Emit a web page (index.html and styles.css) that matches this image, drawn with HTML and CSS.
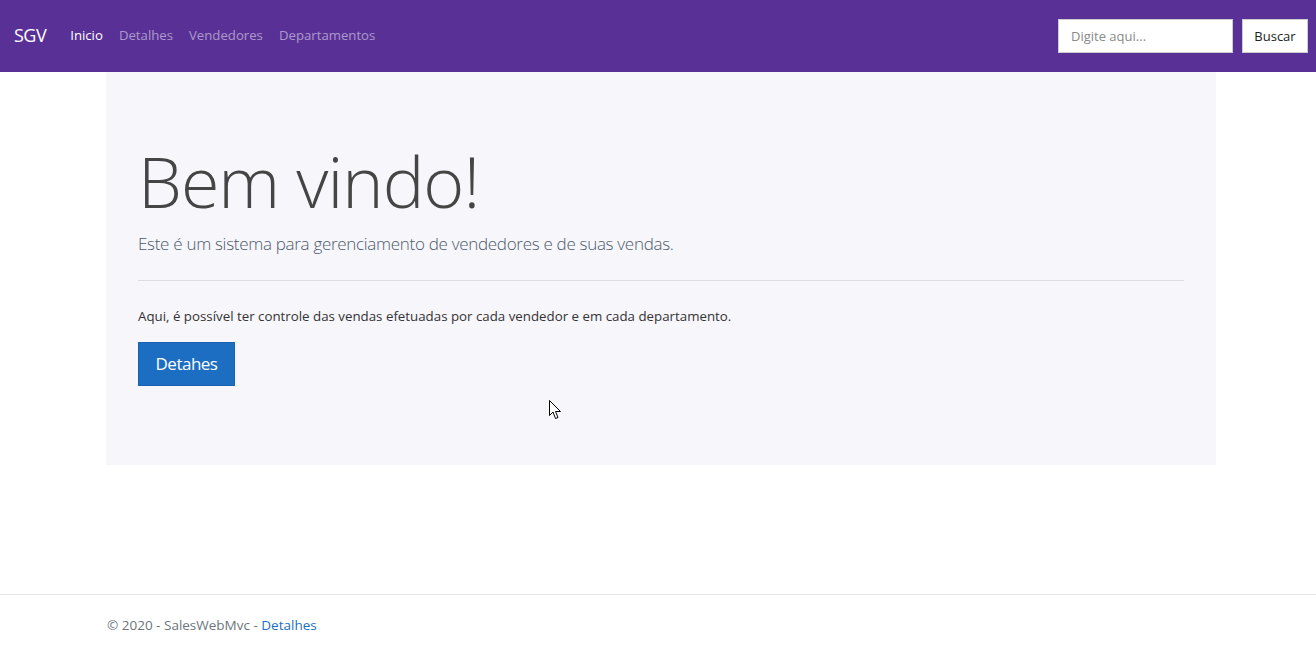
FILE: index.html
```html
<!DOCTYPE html>
<html lang="pt-br">
<head>
    <meta charset="UTF-8">
    <meta name="viewport" content="width=device-width, initial-scale=1.0">
    <title>Inicio - SalesWebMvc</title>
    <link rel="stylesheet" href="styles.css">
</head>
<body>
    <header class="navbar">
        <a class="brand" href="#">SGV</a>
        <nav class="nav-links">
            <a class="nav-link active" href="#">Inicio</a>
            <a class="nav-link" href="#">Detalhes</a>
            <a class="nav-link" href="#">Vendedores</a>
            <a class="nav-link" href="#">Departamentos</a>
        </nav>
        <form class="search">
            <input type="text" class="search-input" placeholder="Digite aqui...">
            <button type="button" class="search-btn">Buscar</button>
        </form>
    </header>

    <main class="container">
        <div class="jumbotron">
            <h1 class="display">Bem vindo!</h1>
            <p class="lead">Este é um sistema para gerenciamento de vendedores e de suas vendas.</p>
            <hr class="divider">
            <p class="info">Aqui, é possível ter controle das vendas efetuadas por cada vendedor e em cada departamento.</p>
            <a class="btn-primary" href="#">Detahes</a>
        </div>
        <!-- mouse pointer captured in the screenshot -->
        <svg class="pointer" width="13" height="20" viewBox="0 0 13 20">
            <path d="M0.5 0.5 L0.5 15.5 L4 12 L6.5 18.5 L9 17.5 L6.5 11.5 L11.5 11.5 Z" fill="#fff" stroke="#000" stroke-width="1"/>
        </svg>
    </main>

    <footer class="footer">
        <div class="container">
            &copy; 2020 - SalesWebMvc - <a href="#">Detalhes</a>
        </div>
    </footer>
</body>
</html>
```

FILE: styles.css
```css
body {
    margin: 0;
    font-family: "Open Sans", "Noto Sans", sans-serif;
    font-size: 14px;
    color: #333;
    background: #fff;
}
a {
    text-decoration: none;
}
.navbar {
    display: flex;
    align-items: center;
    height: 72px;
    padding: 0 8px 0 14px;
    box-sizing: border-box;
    background-color: #593196;
}
.brand {
    font-size: 18px;
    color: #fff;
    margin-right: 24px;
    letter-spacing: -0.5px;
    margin-top: -3px;
}
.nav-links {
    display: flex;
    gap: 16px;
    flex: 1;
    margin-top: -3px;
}
.nav-link {
    font-size: 13.2px;
    color: rgba(255, 255, 255, 0.5);
}
.nav-link.active {
    color: #fff;
}
.search {
    display: flex;
    gap: 9px;
}
.search-input {
    width: 175px;
    height: 34px;
    box-sizing: border-box;
    border: 1px solid #ccc;
    padding: 0 12px;
    font-family: inherit;
    font-size: 13px;
    color: #333;
}
.search-input::placeholder {
    color: #8a8a8a;
}
.search-btn {
    width: 66px;
    height: 34px;
    border: 1px solid #ccc;
    background: #fff;
    font-family: inherit;
    font-size: 13px;
    color: #222;
    padding: 0;
}
.container {
    position: relative;
    width: 1110px;
    margin: 0 auto;
    padding-left: 6px;
}
.jumbotron {
    background-color: #f7f6fb;
    padding: 67px 32px 80px;
    height: 393px;
    box-sizing: border-box;
}
.display {
    margin: 0;
    font-size: 70px;
    font-weight: 300;
    line-height: 1.2;
    color: #454545;
    letter-spacing: -1px;
}
.lead {
    margin: 9px 0 0;
    font-size: 17px;
    font-weight: 300;
    color: #4c5a6b;
    letter-spacing: -0.3px;
}
.divider {
    margin: 25px 0 0;
    border: 0;
    border-top: 1px solid #dedde3;
}
.info {
    margin: 26px 0 17px;
    font-size: 13.3px;
    color: #333;
}
.btn-primary {
    display: inline-block;
    width: 97px;
    height: 44px;
    line-height: 42px;
    box-sizing: border-box;
    text-align: center;
    background-color: #1b6ec2;
    border: 1px solid #1861ac;
    color: #fff;
    font-size: 17px;
    letter-spacing: -0.5px;
}
.pointer {
    position: absolute;
    left: 449px;
    top: 328px;
}
.footer {
    margin-top: 129px;
    border-top: 1px solid #e5e5e5;
    padding-top: 21px;
    font-size: 13.5px;
    color: #6c757d;
}
.footer .container {
    padding-left: 8px;
}
.footer a {
    color: #1b6ec2;
}
```
